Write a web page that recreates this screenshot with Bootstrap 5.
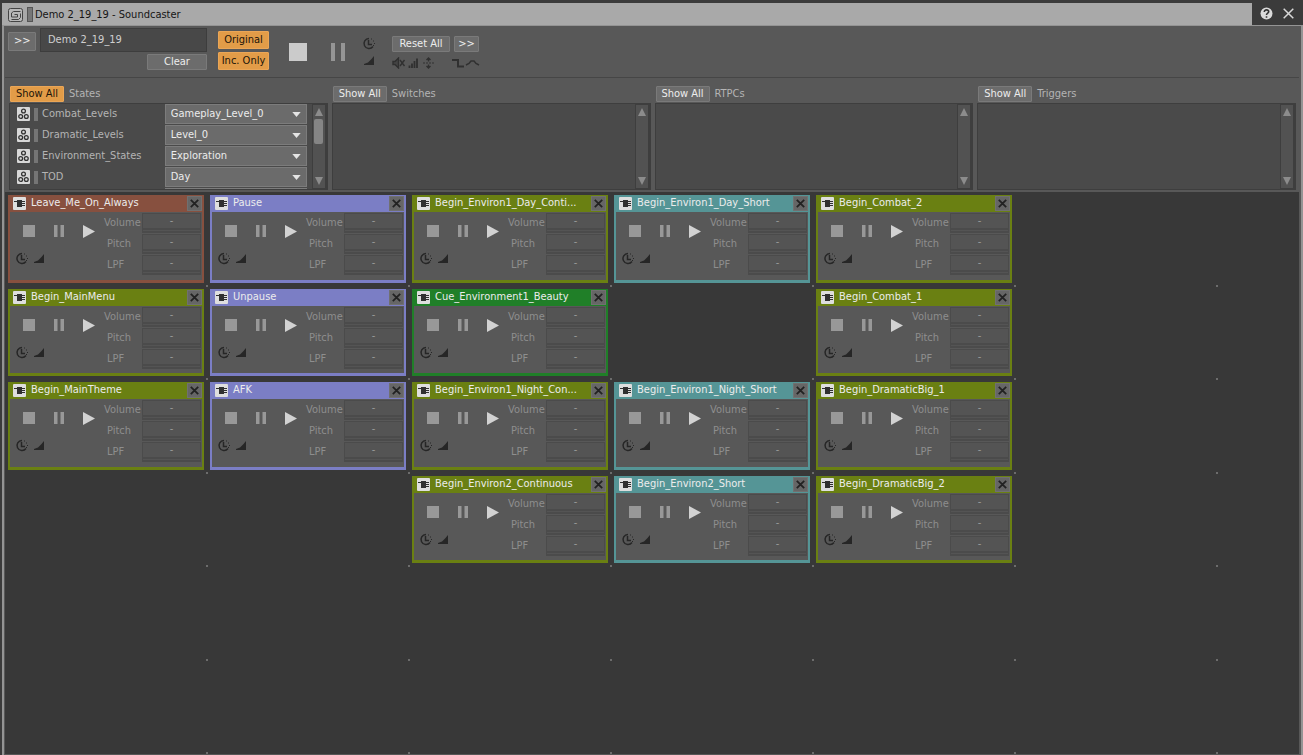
<!DOCTYPE html>
<html lang="en">
<head>
<meta charset="utf-8">
<meta name="viewport" content="width=device-width, initial-scale=1">
<title>Demo 2_19_19 - Soundcaster</title>
<link href="https://cdn.jsdelivr.net/npm/bootstrap@5.3.0/dist/css/bootstrap.min.css" rel="stylesheet">
<style>
  body { font: 11px/14px "DejaVu Sans Condensed", "DejaVu Sans", sans-serif; background: #3b3b3b; color: #b4b4b4; }
  svg { display: block; flex: none; }
  .app { padding: 3px 0 0 2px; overflow: hidden; }

  /* Title bar */
  .titlebar { height: 22px; }
  .title-main { background: #a9a9a9; color: #151515; gap: 4px; padding: 2px 0 0 6px; }
  .title-grip { width: 6px; height: 15px; background: #777; border: 1px solid #555; margin-right: -2px; }
  .title-tools { width: 51px; color: #d8d8d8; gap: 10px; }

  /* Toolbar */
  .window-frame { border: solid #949494; border-width: 1px 2px 0 2px; background: #585858; min-height: 0; padding: 0 2px 0 1px; }
  .tool-row { height: 52px; border-bottom: 1px solid #464646; padding: 2px 0 0 3px; }
  .push { font: inherit; height: 16px; padding: 0 5px; line-height: 14px; border: 1px solid #7a7a7a; border-radius: 1px; background: #6c6c6c; color: #ececec; }
  .push:hover { background: #787878; color: #fff; }
  .push.lit { background: #e29c48; border-color: #eba656; color: #1c1408; }
  .push.tall { height: 19px; width: 28px; margin-top: 4px; }
  .push.filter { height: 18px; width: 51px; padding: 0; }
  .name-box { font: inherit; width: 167px; height: 24px; padding: 0 7px; border: 1px solid #3d3d3d; border-radius: 0; background: #484848; color: #cfcfcf; }
  .icon-btn { border: 0; padding: 0; background: none; color: inherit; }
  .clear-btn { width: 60px; margin-top: 2px; }
  .filters { gap: 3px; padding: 3px 0 0 11px; }
  .master { gap: 24px; padding: 15px 0 0 20px; }
  .indicators { gap: 6px; padding: 9px 0 0 17px; color: #2a2a2a; }
  .resets { gap: 5px; padding: 8px 0 0 17px; }
  .reset-btns { gap: 4px; }
  .reset-all { width: 58px; }
  .reset-more { width: 25px; padding: 0; }

  /* Game sync panels */
  .panel-row { padding: 8px 3px 2px 4px; gap: 4px; }
  .panel-col { flex: 1 1 0; min-width: 0; }
  .panel-head { height: 17px; gap: 5px; padding: 0 0 1px 1px; }
  .panel-head .push { width: 54px; padding: 0; }
  .panel-box { height: 87px; border: 1px solid #3e3e3e; background: #4a4a4a; }
  .state-list { padding: 0 5px 0 7px; }
  .state-item { height: 21px; gap: 4px; }
  .state-item .grip { width: 4px; height: 13px; background: #757575; }
  .state-pick { font: inherit; width: 142px; height: 20px; padding: 0 18px 1px 5px; border: 1px solid #7c7c7c; border-radius: 0; color: #ececec;
    background: #6b6b6b url("data:image/svg+xml,%3Csvg xmlns='http://www.w3.org/2000/svg' viewBox='0 0 10 6'%3E%3Cpath d='M0 0h10L5 6z' fill='%23e4e4e4'/%3E%3C/svg%3E") no-repeat right 5px center; background-size: 9px 5px; }
  .scroll-rail { width: 15px; flex: none; border: solid #3e3e3e; border-width: 1px 2px 1px 1px; background: #525252; color: #8c8c8c; padding: 3px 0; }
  .thumb { width: 9px; height: 25px; background: #858585; border-radius: 2px; margin: 3px 0 auto; }

  /* Cue board */
  .canvas { background: #383838; padding: 3px 0 0 3px; min-height: 0; border-bottom: 1px solid #575757; }
  .board { display: grid; grid-template-columns: repeat(6, 202px); grid-template-rows: repeat(3, 94px 93px); }
  .slot { padding: 0 6px 6px 0; background: linear-gradient(#6c6c6c, #6c6c6c) no-repeat right 2px bottom 2px / 2px 2px; }
  .cue { height: 100%; border: solid var(--tone); border-width: 0 2px 3px; background: #585858; }
  .cue-head { height: 17px; background: var(--tone); color: #ececec; gap: 5px; padding-left: 3px; }
  .cue-head .btn-x { width: 15px; height: 15px; background: #666; color: #222; border: 1px solid #707070; padding: 0; display: grid; place-items: center; }
  .cue-body { color: #8e8e8e; padding: 1px 1px 0 0; }
  .transport { padding: 12px 0 0 13px; gap: 19px; height: 39px; color: #989898; }
  .marks { padding-left: 5px; gap: 6px; color: #262626; }
  .params { display: grid; grid-template-columns: 38px 59px; grid-auto-rows: 21px; }
  .params label { line-height: 19px; padding-left: 3px; }
  .params .vol { padding-left: 0; }
  .param-val { font: inherit; width: 59px; height: 20px; padding: 0; text-align: center; border: 1px solid #4b4b4b; border-bottom: 5px double #4b4b4b; border-radius: 0; background: #545454; color: #9a9a9a; }
  .red { --tone: #87503f; } .blue { --tone: #7b7ec5; } .olive { --tone: #6a8012; } .teal { --tone: #559596; } .green { --tone: #207f28; }
</style>
</head>
<body>
<svg class="d-none" aria-hidden="true">
  <symbol id="clock" viewBox="0 0 13 13"><path d="M7 1.500a5 5 0 1 0 4 8M6.500 3v4.500H10" fill="none" stroke="currentColor" stroke-width="1.500"/><path d="M9 2h1M11 4h1M12 6.500h1M11 8.500h1" stroke="currentColor"/></symbol>
  <symbol id="ramp" viewBox="0 0 10 9"><path d="M0 9V8l4-1.500L7.500 3 10 0v9z" fill="currentColor"/></symbol>
  <symbol id="event" viewBox="0 0 13 13"><rect width="13" height="13" rx="1" fill="#dedede"/><path d="M4 3h5v7H4zM1 4h3v1H1zM9 4h3v1H9zM9 6h3v1H9zM9 8h3v1H9z" fill="#303030"/></symbol>
  <symbol id="state" viewBox="0 0 13 14"><rect width="13" height="14" rx="1" fill="#d8d8d8"/><g fill="none" stroke="#333" stroke-width="1.300"><circle cx="6.500" cy="4" r="1.900"/><circle cx="3.700" cy="9.500" r="1.900"/><circle cx="9.300" cy="9.500" r="1.900"/></g></symbol>
  <symbol id="cross" viewBox="0 0 9 9"><path d="M.8.8l7.400 7.400M8.200.8L.8 8.200" stroke="currentColor" stroke-width="1.800"/></symbol>
  <symbol id="up" viewBox="0 0 8 8"><path d="M4 0l4 8H0z" fill="currentColor"/></symbol>
  <symbol id="down" viewBox="0 0 8 8"><path d="M4 8l4-8H0z" fill="currentColor"/></symbol>
  <symbol id="pause" viewBox="0 0 10 12"><path d="M0 0h3.500v12H0zM6.500 0H10v12H6.500z" fill="currentColor"/></symbol>
</svg>

<div class="app d-flex flex-column vh-100">
  <header class="titlebar d-flex">
    <div class="title-main d-flex align-items-center flex-grow-1">
      <svg width="15" height="14" viewBox="0 0 15 14" fill="none" stroke="#444"><rect x=".5" y=".5" width="14" height="13" rx="2" fill="#b8b8b8"/><path d="M12.500 3.500h-7l-2 1.500v4h6V6.500h-3M12.500 5.500v4l-2 2h-7"/></svg>
      <span class="title-grip"></span>
      <span>Demo 2_19_19 - Soundcaster</span>
    </div>
    <div class="title-tools d-flex align-items-center ps-2">
      <button class="icon-btn" aria-label="Help"><svg width="13" height="13" viewBox="0 0 13 13"><circle cx="6.500" cy="6.500" r="6" fill="#dadada"/><path d="M4.300 5c0-3 4.400-2.600 4.400-.3C8.700 6.200 6.500 6 6.500 8M6.500 9.200v1.600" fill="none" stroke="#333" stroke-width="1.600"/></svg></button>
      <button class="icon-btn" aria-label="Close"><svg width="11" height="11" viewBox="0 0 11 11"><path d="M.7.7l9.600 9.600M10.300.7L.7 10.300" stroke="currentColor" stroke-width="1.500"/></svg></button>
    </div>
  </header>

  <div class="window-frame d-flex flex-column flex-grow-1">
    <div class="tool-row d-flex align-items-start">
      <button class="push tall me-1">&gt;&gt;</button>
      <div class="d-flex flex-column align-items-end">
        <input class="name-box" type="text" value="Demo 2_19_19" aria-label="Soundcaster session">
        <button class="push clear-btn">Clear</button>
      </div>
      <div class="filters d-flex flex-column">
        <button class="push lit filter">Original</button>
        <button class="push lit filter">Inc. Only</button>
      </div>
      <div class="master d-flex">
        <button class="icon-btn" aria-label="Stop all"><svg width="18" height="18"><rect width="18" height="18" fill="#cbcbcb"/></svg></button>
        <button class="icon-btn" aria-label="Pause all"><svg width="14" height="18" viewBox="0 0 14 18"><path d="M0 0h4v18H0zM10 0h4v18h-4z" fill="#959595"/></svg></button>
      </div>
      <div class="indicators d-flex flex-column align-items-center">
        <svg width="13" height="13"><use href="#clock"/></svg>
        <svg width="10" height="9"><use href="#ramp"/></svg>
      </div>
      <div class="resets d-flex flex-column">
        <div class="reset-btns d-flex"><button class="push reset-all">Reset All</button><button class="push reset-more">&gt;&gt;</button></div>
        <svg width="88" height="12" viewBox="0 0 88 12" fill="none" stroke="#303030">
          <path d="M1 4.500h2L6.500 1v10L3 7.500H1z" fill="#444" stroke-width="1.400"/><path d="M8 3l4.500 6M12.500 3L8 9" stroke-width="1.400"/>
          <path d="M17.500 8.500V11M20 6.500V11M22.500 4v7M25 1.500V11" stroke-width="1.800"/>
          <path d="M31 6h11" stroke-dasharray="2 1"/><path d="M36.500 1v3.500M36.500 7.500V11M34.500 3l2-2 2 2M34.500 9l2 2 2-2" stroke-width="1.400"/>
          <path d="M60 3h6v6.500h6" stroke-width="2"/>
          <path d="M74 8l3-1.500L79 4h3l2 2.500L87 8" stroke-width="1.500"/>
        </svg>
      </div>
    </div>

    <div class="panel-row d-flex" id="panels"></div>

    <main class="canvas flex-grow-1 overflow-hidden">
      <div class="board" id="board"></div>
    </main>
  </div>
</div>

<script>
  const states = [
    ["Combat_Levels", "Gameplay_Level_0"], ["Dramatic_Levels", "Level_0"],
    ["Environment_States", "Exploration"], ["TOD", "Day"], ["", ""]
  ];
  const stateList = states.map(([name, value], i) => `
    <div class="state-item d-flex align-items-center">
      <svg width="13" height="14"><use href="#state"/></svg>
      <span class="grip"></span>
      <label class="flex-grow-1" for="state${i}">${name}</label>
      <select class="form-select state-pick" id="state${i}" aria-label="${name || "State"}"><option>${value}</option></select>
    </div>`).join("");

  document.getElementById("panels").innerHTML = ["States", "Switches", "RTPCs", "Triggers"].map((title, i) => `
    <section class="panel-col">
      <div class="panel-head d-flex align-items-center"><button class="push ${i ? "" : "lit"}">Show All</button><span>${title}</span></div>
      <div class="panel-box d-flex overflow-hidden">
        <div class="flex-grow-1 ${i ? "" : "state-list"}">${i ? "" : stateList}</div>
        <div class="scroll-rail d-flex flex-column align-items-center justify-content-between">
          <svg width="8" height="8"><use href="#up"/></svg>${i ? "" : '<span class="thumb"></span>'}<svg width="8" height="8"><use href="#down"/></svg>
        </div>
      </div>
    </section>`).join("");

  // One entry per board slot, row by row; null is an empty slot.
  const cues = [
    ["Leave_Me_On_Always", "red"], ["Pause", "blue"], ["Begin_Environ1_Day_Conti...", "olive"], ["Begin_Environ1_Day_Short", "teal"], ["Begin_Combat_2", "olive"], null,
    ["Begin_MainMenu", "olive"], ["Unpause", "blue"], ["Cue_Environment1_Beauty", "green"], null, ["Begin_Combat_1", "olive"], null,
    ["Begin_MainTheme", "olive"], ["AFK", "blue"], ["Begin_Environ1_Night_Con...", "olive"], ["Begin_Environ1_Night_Short", "teal"], ["Begin_DramaticBig_1", "olive"], null,
    null, null, ["Begin_Environ2_Continuous", "olive"], ["Begin_Environ2_Short", "teal"], ["Begin_DramaticBig_2", "olive"], null,
    ...Array(12).fill(null)
  ];
  document.getElementById("board").innerHTML = cues.map((cue, i) => `<div class="slot">${cue ? `
    <article class="cue ${cue[1]}">
      <div class="cue-head d-flex align-items-center">
        <svg width="13" height="13"><use href="#event"/></svg>
        <span class="flex-grow-1 text-nowrap">${cue[0]}</span>
        <button class="btn-x" aria-label="Remove"><svg width="9" height="9"><use href="#cross"/></svg></button>
      </div>
      <div class="cue-body d-flex justify-content-between">
        <div>
          <div class="transport d-flex align-items-start">
            <button class="icon-btn" aria-label="Stop"><svg width="12" height="12"><rect width="12" height="12" fill="currentColor"/></svg></button>
            <button class="icon-btn" aria-label="Pause"><svg width="10" height="12"><use href="#pause"/></svg></button>
            <button class="icon-btn" aria-label="Play"><svg width="12" height="13" viewBox="0 0 12 13"><path d="M0 0l12 6.500L0 13z" fill="#d2d2d2"/></svg></button>
          </div>
          <div class="marks d-flex align-items-center"><svg width="13" height="13"><use href="#clock"/></svg><svg width="10" height="9"><use href="#ramp"/></svg></div>
        </div>
        <div class="params">
          <label class="vol" for="v${i}">Volume</label><input class="param-val" id="v${i}" value="-">
          <label for="p${i}">Pitch</label><input class="param-val" id="p${i}" value="-">
          <label for="l${i}">LPF</label><input class="param-val" id="l${i}" value="-">
        </div>
      </div>
    </article>` : ""}</div>`).join("");
</script>
<script src="https://cdn.jsdelivr.net/npm/bootstrap@5.3.0/dist/js/bootstrap.bundle.min.js"></script>
</body>
</html>
